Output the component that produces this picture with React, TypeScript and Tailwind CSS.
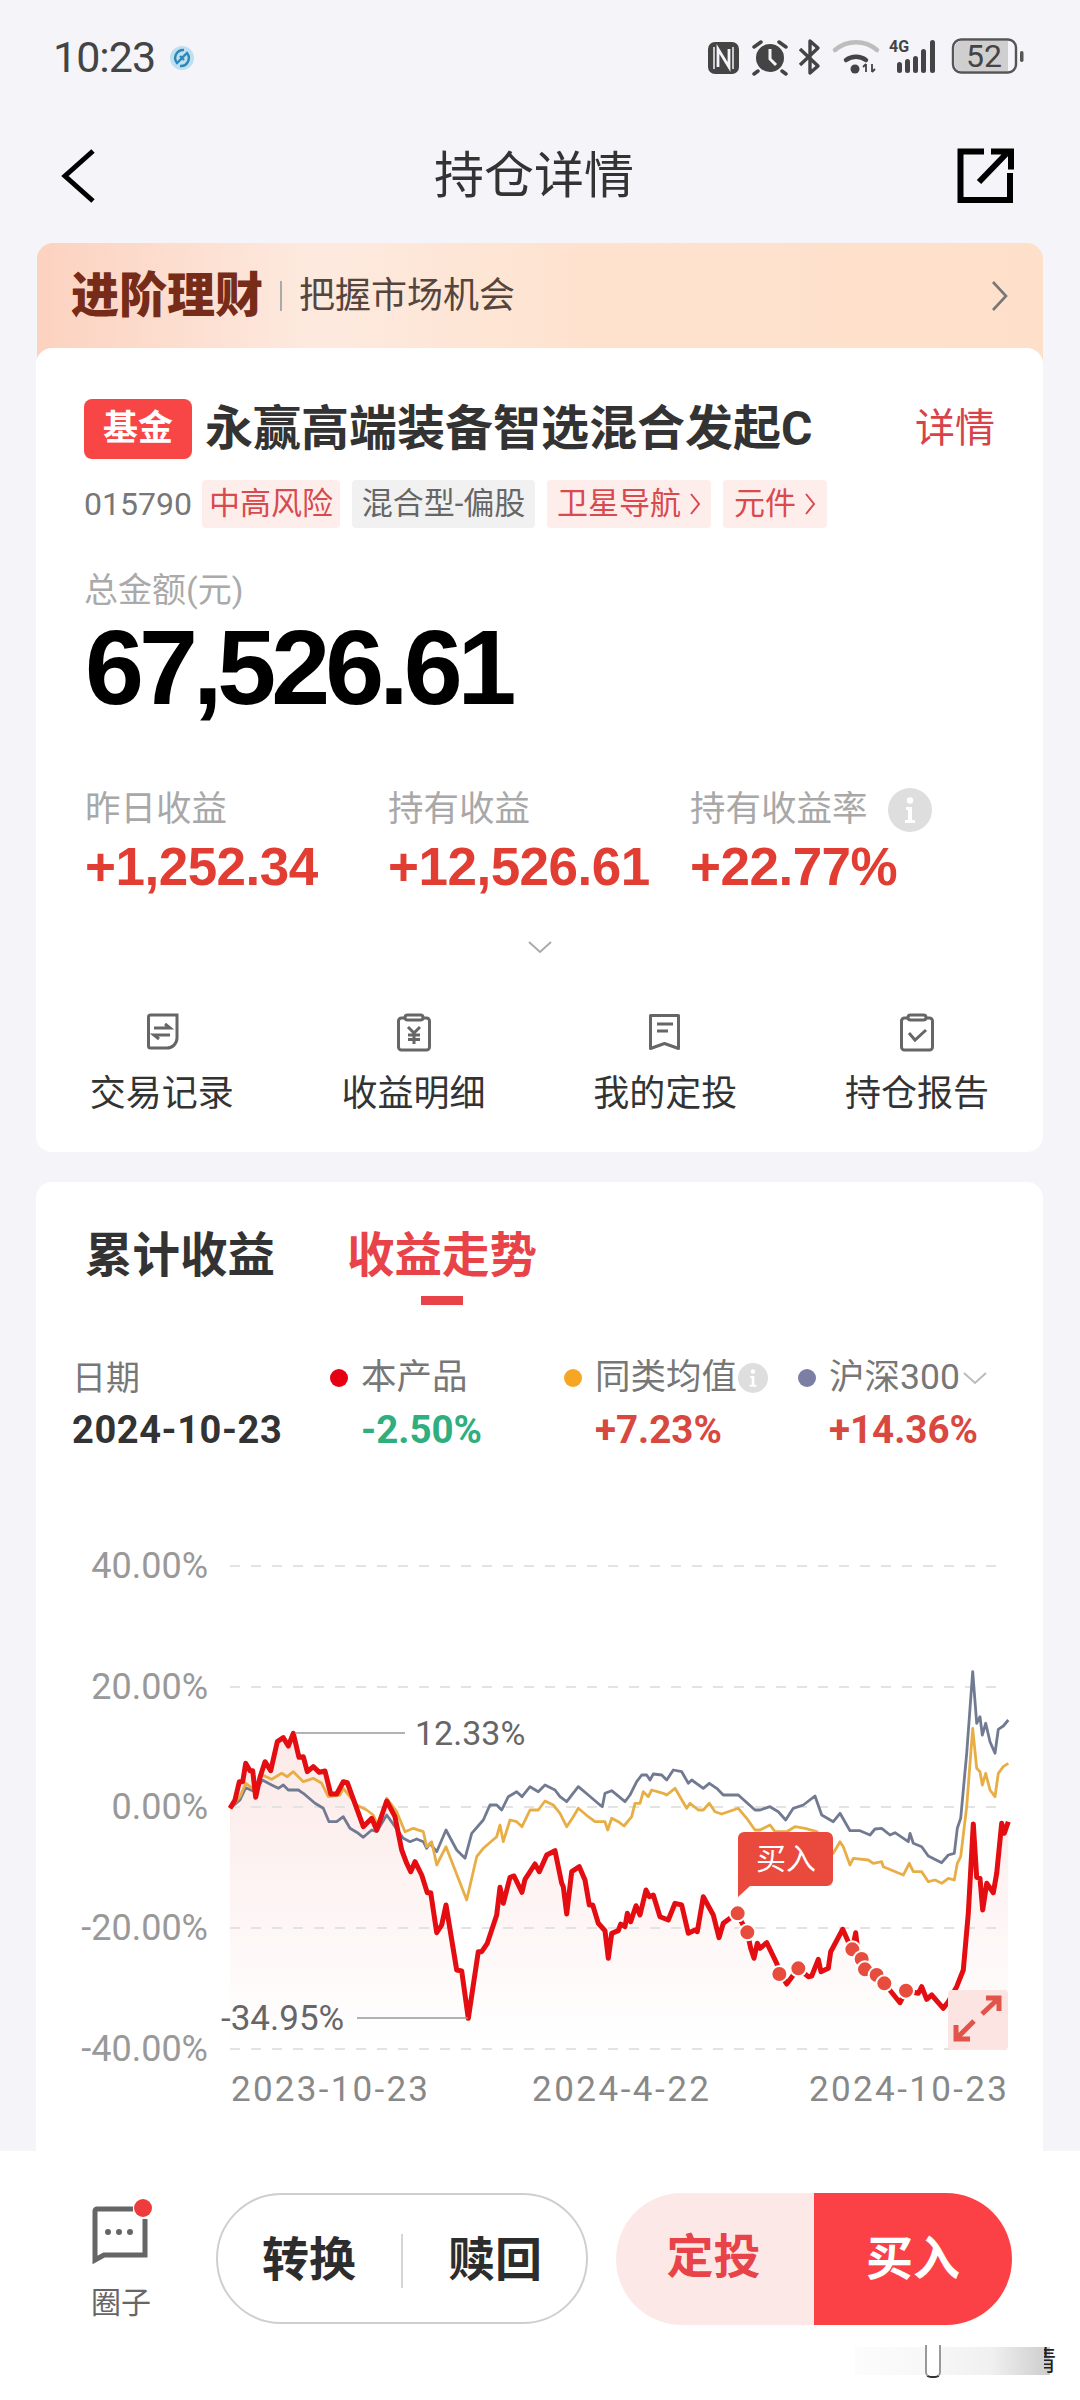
import React from "react";

const red4 = "90,505 105,480 118,425 128,425 137,370 150,392 158,392 167,472 180,412 195,365 212,392 232,305 250,293 265,318 280,280 297,352 310,350 322,395 340,380 358,397 375,393 392,462 410,462 430,425 442,428 470,505 490,560 515,535 530,570 560,483 585,530 605,630 620,670 632,695 645,665 665,705 682,758 692,758 710,878 725,855 738,795 770,990 785,993 805,1135 835,935 845,935 862,910 890,825 900,742 910,790 930,712 942,708 966,757 975,718 1005,672 1018,695 1040,645 1065,632 1085,730 1090,740 1100,822 1115,695 1138,680 1155,720 1168,795 1178,795 1195,850 1215,872 1225,955 1235,880 1255,872";
const red5 = "2,852 15,860 22,820 32,845 48,797 60,825 78,750 88,770 100,765 120,830 145,840 165,790 185,795 205,880 225,870 232,875 250,770 280,825 297,893 310,850 350,820 382,877 392,925 402,955 412,910 420,925 440,908 470,970 480,1000 500,1032 535,985 565,1010 575,1008 595,958 603,995 625,985 632,935 668,868 685,905 697,930 707,878 712,920 725,955 735,988 770,1005 793,1030 840,1088 858,1052 895,1060 905,1040 920,1078 935,1065 970,1105 985,1085 1010,1040 1030,990 1045,820 1060,552 1070,712 1080,715 1088,810 1100,730 1120,758 1130,700 1145,550 1153,580 1165,545";
const gold4 = "90,505 120,470 137,430 165,450 187,405 215,418 245,400 262,410 280,395 310,425 340,415 365,430 385,470 420,465 430,445 470,495 500,510 520,525 535,560 560,475 590,515 615,575 640,565 670,575 680,620 695,605 710,675 738,620 800,780 830,650 850,625 890,590 900,555 910,605 930,540 950,545 966,560 990,510 1015,510 1035,483 1060,495 1080,520 1100,560 1120,530 1135,505 1165,530 1185,545 1215,545 1223,570 1235,535 1255,545";
const gold5 = "12,558 35,530 45,490 60,490 70,455 85,470 95,450 130,460 140,465 165,445 200,505 210,490 235,510 250,510 268,490 285,515 305,522 355,505 380,535 405,570 420,570 450,555 465,575 500,575 525,560 555,565 590,575 640,640 660,605 670,620 690,675 700,655 745,660 760,670 785,665 790,680 850,705 868,670 880,695 905,695 925,725 945,720 965,730 985,715 1003,720 1012,670 1022,650 1040,500 1058,265 1070,385 1080,395 1087,435 1097,400 1110,450 1125,470 1135,400 1150,380 1165,370";
const gray4 = "90,505 120,480 137,443 165,455 187,420 215,435 235,445 250,435 265,450 295,450 310,460 345,490 370,505 387,545 410,545 430,530 450,565 475,580 490,592 515,570 530,575 560,525 610,595 630,605 650,597 670,605 680,625 690,610 710,635 738,570 770,630 795,655 815,580 850,540 870,495 890,495 905,510 925,470 950,455 966,470 990,440 1015,455 1035,435 1065,450 1080,470 1100,485 1135,440 1165,465 1200,495 1207,500 1215,460 1235,452";
const gray5 = "15,485 30,465 50,425 65,405 80,405 90,420 100,402 125,405 140,420 160,390 185,395 205,430 215,420 250,445 268,430 290,445 310,465 355,465 405,510 420,510 450,500 475,515 497,540 510,520 520,505 550,495 585,468 605,525 640,545 660,520 690,572 720,572 750,585 765,567 785,565 810,585 825,578 865,605 870,580 880,610 905,620 925,648 965,668 985,645 1003,640 1012,565 1022,535 1040,340 1058,95 1070,250 1080,230 1087,285 1097,250 1110,305 1125,340 1135,268 1150,258 1165,240";

const conv = (s: string, ox: number) =>
  s.split(" ").map((p) => {
    const [x, y] = p.split(",").map(Number);
    return `${(ox + x / 3).toFixed(1)},${(1640 + y / 3).toFixed(1)}`;
  });
const line = (a: string, b: string) => [...conv(a, 200), ...conv(b, 620)];

const redPts = line(red4, red5);
const dots = [[353,820],[382,877],[478,1002],[535,985],[697,928],[725,957],[735,988],[770,1005],[793,1030],[858,1052]];
const grid = [
  { y: 1566, t: "40.00%" },
  { y: 1687, t: "20.00%" },
  { y: 1807, t: "0.00%" },
  { y: 1928, t: "-20.00%" },
  { y: 2049, t: "-40.00%" },
];

function Chart() {
  return (
    <svg viewBox="36 1454 1007 697" className="block w-[1007px] h-[697px]">
      <defs>
        <linearGradient id="area" gradientUnits="userSpaceOnUse" x1="0" y1="1733" x2="0" y2="2049">
          <stop offset="0" stopColor="#fbe9e7" />
          <stop offset="1" stopColor="#ffffff" />
        </linearGradient>
      </defs>
      <polygon points={`230,2049 ${redPts.join(" ")} 1008,2049`} fill="url(#area)" />
      {grid.map((g) => (
        <g key={g.y}>
          <line x1="230" x2="1006" y1={g.y} y2={g.y} stroke="#e3e3e3" strokeWidth="2" strokeDasharray="10 11" />
          <text x="208" y={g.y + 12} textAnchor="end" fontSize="36" fill="#999">{g.t}</text>
        </g>
      ))}
      <polyline points={line(gray4, gray5).join(" ")} fill="none" stroke="#727a92" strokeWidth="2.8" strokeLinejoin="round" />
      <polyline points={line(gold4, gold5).join(" ")} fill="none" stroke="#e8ae45" strokeWidth="2.8" strokeLinejoin="round" />
      <polyline points={redPts.join(" ")} fill="none" stroke="#e30d12" strokeWidth="5" strokeLinejoin="round" />
      <line x1="295" x2="405" y1="1733" y2="1733" stroke="#999" strokeWidth="1.5" />
      <text x="415" y="1745" fontSize="34" fill="#666">12.33%</text>
      <line x1="357" x2="468" y1="2018" y2="2018" stroke="#999" strokeWidth="1.5" />
      <text x="221" y="2030" fontSize="35" fill="#666">-34.95%</text>
      {dots.map(([x, y]) => (
        <circle key={`${x}-${y}`} cx={620 + x / 3} cy={1640 + y / 3} r="8" fill="#e84c3d" stroke="#fff" strokeWidth="2" />
      ))}
      <path d="M738 1838a6 6 0 0 1 6-6h83a6 6 0 0 1 6 6v42a6 6 0 0 1-6 6h-77l-12 11z" fill="#ea4a3d" />
      <text x="786" y="1869" textAnchor="middle" fontSize="30" fill="#fff">买入</text>
      <rect x="948" y="1990" width="60" height="60" rx="4" fill="#fce4e2" />
      <path d="M982 2014l16-15M986 1998h13v13M974 2021l-17 17M956 2025v14h14" fill="none" stroke="#e2534a" strokeWidth="5" />
      <text x="231" y="2101" fontSize="35" fill="#888" textLength="197">2023-10-23</text>
      <text x="532" y="2101" fontSize="35" fill="#888" textLength="177">2024-4-22</text>
      <text x="809" y="2101" fontSize="35" fill="#888" textLength="198">2024-10-23</text>
    </svg>
  );
}

function StatusIcons() {
  return (
    <svg viewBox="700 30 330 56" className="block w-[330px] h-[56px]">
      <rect x="708" y="42" width="31" height="32" rx="7" fill="#444" />
      <path d="M714 47v22M733 47v22" stroke="#f4f4f9" strokeWidth="1.500" />
      <path d="M718 67V49l11 18V49" fill="none" stroke="#f4f4f9" strokeWidth="2.800" />
      <circle cx="770" cy="58" r="14" fill="#444" />
      <path d="M770 49v10l6 6" fill="none" stroke="#f4f4f9" strokeWidth="3" />
      <path d="M754 47l7-5M786 47l-7-5M758 71l-4 3M782 71l4 3" stroke="#444" strokeWidth="3.500" strokeLinecap="round" />
      <path d="M800 49l18 17-8 7V41l8 7-18 17" fill="none" stroke="#444" strokeWidth="3.400" strokeLinejoin="round" />
      <path d="M835 50a32 32 0 0 1 42 0" fill="none" stroke="#bdbdbd" strokeWidth="4.500" strokeLinecap="round" />
      <path d="M846 60a17 17 0 0 1 20 0" fill="none" stroke="#444" strokeWidth="4.500" strokeLinecap="round" />
      <circle cx="855" cy="69" r="4.500" fill="#444" />
      <path d="M866 72v-8M863 67l3-3M872 64v8M875 69l-3 3" stroke="#444" strokeWidth="1.800" fill="none" />
      <text x="889" y="52" fontSize="16" fontWeight="700" fill="#444">4G</text>
      <g fill="#444">
        <rect x="897" y="62" width="5" height="11" rx="2.500" />
        <rect x="905" y="59" width="5" height="14" rx="2.500" />
        <rect x="913" y="56" width="5" height="17" rx="2.500" />
        <rect x="921" y="49" width="5" height="24" rx="2.500" />
        <rect x="930" y="40" width="5" height="33" rx="2.500" />
      </g>
      <rect x="953" y="39.500" width="63" height="33" rx="8" fill="#f4f4f9" stroke="#555" strokeWidth="2.400" />
      <path d="M955 47a6 6 0 0 1 6-6h47v30h-47a6 6 0 0 1-6-6z" fill="#cfcfcf" />
      <text x="984" y="67" textAnchor="middle" fontSize="32" fill="#444">52</text>
      <rect x="1020" y="51" width="3.500" height="11" rx="1.700" fill="#555" />
    </svg>
  );
}

const Tag = ({ t, w, gray, arrow }: { t: string; w: string; gray?: boolean; arrow?: boolean }) => (
  <div className={`h-[48px] ${w} rounded-[4px] flex items-center justify-center gap-[8px] text-[31px] whitespace-nowrap ${gray ? "bg-[#f1f1f1] text-[#666]" : "bg-[#fdeeec] text-[#d94a4f]"}`}>
    <span>{t}</span>
    {arrow && (
      <svg viewBox="0 0 12 24" className="w-[12px] h-[24px]">
        <path d="M2 2l8 10-8 10" fill="none" stroke="#d94a4f" strokeWidth="2" />
      </svg>
    )}
  </div>
);

const InfoDot = ({ size }: { size: string }) => (
  <svg viewBox="0 0 44 44" className={size}>
    <circle cx="22" cy="22" r="22" fill="#dedede" />
    <circle cx="22" cy="12.500" r="3.200" fill="#fff" />
    <path d="M18 19h6v13h3v3H17v-3h3v-10h-2z" fill="#fff" />
  </svg>
);

const Stat = ({ l, v, w, info }: { l: string; v: string; w: string; info?: boolean }) => (
  <div className={w}>
    <div className="h-[40px] flex items-center text-[35.500px] text-[#a8a8a8] whitespace-nowrap">
      {l}
      {info && <InfoDot size="w-[44px] h-[44px] ml-[20px]" />}
    </div>
    <div className="mt-[9px] h-[56px] flex items-center text-[53px] tracking-[-0.5px] font-bold text-[#e23d33] font-['Liberation_Sans',sans-serif] whitespace-nowrap">{v}</div>
  </div>
);

const icons = [
  <g key="a" fill="none" stroke="#666" strokeWidth="3">
    <path d="M6.500 5a2 2 0 0 1 2-2H35v23a10 10 0 0 1-10 10H8.500a2 2 0 0 1-2-2z" />
    <path d="M12 16h16l-5-4M28 23H12l5 4" />
  </g>,
  <g key="b" fill="none" stroke="#666" strokeWidth="3">
    <rect x="4.500" y="6" width="31" height="32" rx="3" />
    <rect x="11" y="3" width="18" height="5" rx="2.500" fill="#fff" />
    <path d="M14 15l6 6 6-6M20 21v11M14 23h12M14 27.500h12" />
  </g>,
  <g key="c" fill="none" stroke="#666" strokeWidth="3">
    <path d="M5.500 3.500h28v33l-14-5-14 5z" strokeLinejoin="round" />
    <path d="M12 12h16M12 19h11" />
  </g>,
  <g key="d" fill="none" stroke="#666" strokeWidth="3">
    <rect x="4.500" y="6" width="31" height="32" rx="3" />
    <rect x="11" y="3" width="18" height="5" rx="2.500" fill="#fff" />
    <path d="M12 21l6 7 11-10" />
  </g>,
];

const Legend = ({ c, t, v, vc, w, info, more }: { c: string; t: string; v: string; vc: string; w: string; info?: boolean; more?: boolean }) => (
  <div className={w}>
    <div className="h-[44px] flex items-center text-[35.500px] text-[#777] whitespace-nowrap">
      <span className={`w-[18px] h-[18px] rounded-full mr-[13px] ${c}`} />
      {t}
      {info && <InfoDot size="w-[30px] h-[30px] ml-[1px]" />}
      {more && (
        <svg viewBox="0 0 26 14" className="w-[26px] h-[14px] ml-[2px]">
          <path d="M2 2l11 10 11-10" fill="none" stroke="#bbb" strokeWidth="2" />
        </svg>
      )}
    </div>
    <div className={`mt-[6px] h-[48px] pl-[31px] flex items-center text-[38.500px] font-bold whitespace-nowrap ${vc}`}>{v}</div>
  </div>
);

export default function App() {
  return (
    <div className="relative w-[1080px] h-[2400px] overflow-hidden flex flex-col bg-[#f4f4f9] font-['Roboto','Noto_Sans_CJK_SC',sans-serif]">
      <div className="h-[115px] flex items-center justify-between pl-[53px] pr-[50px]">
        <div className="flex items-center gap-[14px]">
          <span className="text-[43px] text-[#444] tracking-[-1px]">10:23</span>
          <svg viewBox="0 0 26 26" className="w-[26px] h-[26px]">
            <circle cx="13" cy="13" r="12" fill="#bfe0ef" />
            <path d="M15 5a8 8 0 0 0-7 13l5-5-2-2M11 21a8 8 0 0 0 7-13l-5 5 2 2" fill="none" stroke="#2f86b8" strokeWidth="2.400" />
          </svg>
        </div>
        <StatusIcons />
      </div>

      <div className="h-[122px] flex items-center justify-between pl-[60px] pr-[66px] relative">
        <svg viewBox="0 0 36 56" className="w-[36px] h-[56px]">
          <path d="M33 3L5 28l28 25" fill="none" stroke="#000" strokeWidth="5" />
        </svg>
        <span className="text-[50px] text-[#333] absolute left-[434px]">持仓详情</span>
        <svg viewBox="955 150 58 58" className="w-[58px] h-[58px]">
          <path d="M983 154.500H959.500V203H1009V176M978 185l28-29M990 154.500h20v18" fill="none" stroke="#000" strokeWidth="6" />
        </svg>
      </div>

      <div className="mt-[6px] mx-[37px] h-[120px] -mb-[15px] rounded-t-[16px] bg-[linear-gradient(90deg,#fcd2c0_0%,#fdeadf_28%,#fee2ce_55%,#fee0ca_100%)] px-[34px] pb-[15px] flex items-center">
        <span className="text-[48px] font-black text-[#762c18]">进阶理财</span>
        <span className="w-[2px] h-[30px] bg-[#aaa] mx-[17px]" />
        <span className="text-[36px] text-[#54453e]">把握市场机会</span>
        <svg viewBox="0 0 18 32" className="ml-auto w-[18px] h-[32px]">
          <path d="M2 2l13 14-13 14" fill="none" stroke="#777" strokeWidth="2.600" />
        </svg>
      </div>

      <div className="relative mx-[36px] w-[1007px] h-[804px] bg-white rounded-[16px]">
        <div className="pt-[51px] pl-[48px] flex items-center h-[111px]">
          <div className="w-[108px] h-[60px] rounded-[8px] bg-[#f84545] text-white text-[35px] font-bold flex items-center justify-center">基金</div>
          <div className="ml-[13px] text-[48px] font-bold text-[#333] whitespace-nowrap">永赢高端装备智选混合发起C</div>
          <div className="ml-auto mr-[48px] text-[40px] text-[#d8434a]">详情</div>
        </div>
        <div className="mt-[21px] pl-[48px] flex items-center gap-[12px]">
          <span className="text-[32px] text-[#777] w-[106px]">015790</span>
          <Tag t="中高风险" w="w-[138px]" />
          <Tag t="混合型-偏股" w="w-[183px]" gray />
          <Tag t="卫星导航" w="w-[164px]" arrow />
          <Tag t="元件" w="w-[104px]" arrow />
        </div>
        <div className="mt-[42px] pl-[48px] h-[40px] flex items-center text-[34px] text-[#aaa]">总金额(元)</div>
        <div className="mt-[12px] pl-[49px] h-[90px] flex items-center text-[106px] font-bold text-black tracking-[-5px] font-['Liberation_Sans',sans-serif]">67,526.61</div>
        <div className="mt-[78px] pl-[49px] flex">
          <Stat l="昨日收益" v="+1,252.34" w="w-[303px]" />
          <Stat l="持有收益" v="+12,526.61" w="w-[302px]" />
          <Stat l="持有收益率" v="+22.77%" w="w-[300px]" info />
        </div>
        <div className="mt-[45px] flex justify-center">
          <svg viewBox="0 0 26 14" className="w-[26px] h-[14px]">
            <path d="M2 2l11 10 11-10" fill="none" stroke="#aaa" strokeWidth="2" />
          </svg>
        </div>
        <div className="mt-[58px] grid grid-cols-4">
          {["交易记录", "收益明细", "我的定投", "持仓报告"].map((t, i) => (
            <div key={t} className="flex flex-col items-center">
              <svg viewBox="0 0 40 40" className="w-[40px] h-[40px]">{icons[i]}</svg>
              <div className="mt-[22px] h-[40px] flex items-center text-[36px] text-[#333]">{t}</div>
            </div>
          ))}
        </div>
      </div>

      <div className="mt-[30px] mx-[36px] w-[1007px] flex-1 bg-white rounded-t-[16px] overflow-hidden">
        <div className="pt-[45px] pl-[49px] flex gap-[72px] text-[47.500px] font-bold">
          <div className="h-[60px] flex items-center text-[#333]">累计收益</div>
          <div className="flex flex-col items-center">
            <div className="h-[60px] flex items-center text-[#e84348]">收益走势</div>
            <div className="mt-[9px] w-[42px] h-[9px] bg-[#e84348]" />
          </div>
        </div>
        <div className="mt-[51px] pl-[36px] flex">
          <div className="w-[258px]">
            <div className="h-[44px] flex items-center text-[34px] text-[#777]">日期</div>
            <div className="mt-[6px] h-[48px] flex items-center text-[38px] font-bold text-[#333] tracking-[0.6px] whitespace-nowrap">2024-10-23</div>
          </div>
          <Legend c="bg-[#e60012]" t="本产品" v="-2.50%" vc="text-[#2fae7f]" w="w-[234px]" />
          <Legend c="bg-[#f5a623]" t="同类均值" v="+7.23%" vc="text-[#d8483f]" w="w-[234px]" info />
          <Legend c="bg-[#7a7fa3]" t="沪深300" v="+14.36%" vc="text-[#d8483f]" w="w-[245px]" more />
        </div>
        <Chart />
      </div>

      <div className="relative h-[249px] bg-white flex items-start">
        <div className="ml-[84px] mt-[48px] w-[74px] flex flex-col items-center">
          <svg viewBox="84 2199 74 70" className="w-[74px] h-[70px]">
            <path d="M133 2209H97a2 2 0 0 0-2 2v49l9-5h41v-36" fill="none" stroke="#666" strokeWidth="5" />
            <circle cx="108" cy="2232" r="3" fill="#666" />
            <circle cx="119" cy="2232" r="3" fill="#666" />
            <circle cx="130" cy="2232" r="3" fill="#666" />
            <circle cx="143" cy="2208" r="9" fill="#ee3b3b" />
          </svg>
          <div className="mt-[16px] h-[34px] flex items-center text-[30px] text-[#666]">圈子</div>
        </div>
        <div className="ml-[58px] mt-[42px] w-[372px] h-[131px] pt-[4px] rounded-full border-2 border-[#cfcfcf] flex items-center text-[47px] font-bold text-[#2d2d2d]">
          <span className="ml-[44px]">转换</span>
          <span className="mx-[45px] w-[2px] h-[54px] bg-[#d5d5d5]" />
          <span>赎回</span>
        </div>
        <div className="ml-[28px] mt-[42px] w-[396px] h-[132px] rounded-full overflow-hidden flex text-[47px] font-bold">
          <div className="w-[198px] bg-[#fce9e7] text-[#e84348] flex items-center justify-center pr-[3px] pb-[3px]">定投</div>
          <div className="flex-1 bg-[#fb4146] text-white flex items-center justify-center">买入</div>
        </div>
        <div className="absolute left-[855px] top-[196px] w-[195px] h-[28px] bg-[linear-gradient(90deg,rgba(0,0,0,0.01),rgba(0,0,0,0.03)_40%,rgba(0,0,0,0.06)_70%,rgba(0,0,0,0.2))]" />
        <div className="absolute left-[925px] top-[194px] w-[16px] h-[33px] border-x-2 border-b-2 rounded-b-[6px] border-x-[#999] border-b-[#333] bg-white" />
        <div className="absolute left-[1044px] top-[196px] w-[12px] h-[30px] overflow-hidden text-[28px] leading-[30px] text-[#222]">
          <span className="block -ml-[16px]">情</span>
        </div>
      </div>
    </div>
  );
}
